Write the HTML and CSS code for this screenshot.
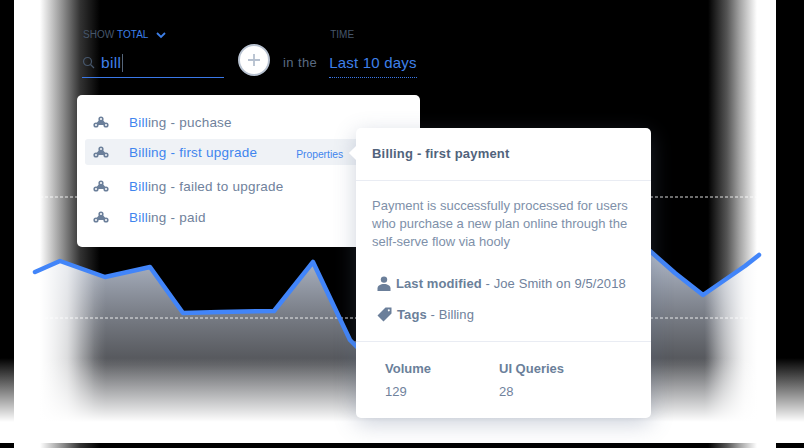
FILE: index.html
```html
<!DOCTYPE html>
<html lang="en">
<head>
  <meta charset="UTF-8">
  <meta name="viewport" content="width=device-width, initial-scale=1.0">
  <title>Billing events</title>
  <link rel="stylesheet" href="styles.css">
</head>
<body>
  <div class="stage">
    <div class="bands"></div>

    <svg class="chart" width="804" height="448" viewBox="0 0 804 448">
      <defs>
        <linearGradient id="areaFill" x1="0" y1="255" x2="0" y2="365" gradientUnits="userSpaceOnUse">
          <stop offset="0" stop-color="#b9c2d3" stop-opacity="0.95"/>
          <stop offset="1" stop-color="#85888f" stop-opacity="0.62"/>
        </linearGradient>
        <linearGradient id="sideGlow" x1="40" y1="0" x2="757" y2="0" gradientUnits="userSpaceOnUse">
          <stop offset="0" stop-color="#fff" stop-opacity="1"/>
          <stop offset="0.038" stop-color="#fff" stop-opacity="0.72"/>
          <stop offset="0.06" stop-color="#fff" stop-opacity="0.36"/>
          <stop offset="0.076" stop-color="#fff" stop-opacity="0.12"/>
          <stop offset="0.092" stop-color="#fff" stop-opacity="0"/>
          <stop offset="0.927" stop-color="#fff" stop-opacity="0"/>
          <stop offset="0.955" stop-color="#fff" stop-opacity="0.5"/>
          <stop offset="0.983" stop-color="#fff" stop-opacity="0.9"/>
          <stop offset="1" stop-color="#fff" stop-opacity="1"/>
        </linearGradient>
      </defs>
      <path class="area" d="M35 272L60 261L105 277L150 267L183 313L274 311L313 262L352 342L651 252L675 273L703 295L745 266L759 255V443H35Z"/>
      <path class="area-glow" d="M35 272L60 261L105 277L150 267L183 313L274 311L313 262L352 342L651 252L675 273L703 295L745 266L759 255V443H35Z"/>
    </svg>

    <div class="fade"></div>

    <svg class="chart" width="804" height="448" viewBox="0 0 804 448">
      <line class="guide" x1="40" y1="197" x2="757" y2="197"/>
      <line class="guide" x1="40" y1="318" x2="757" y2="318"/>
      <polyline class="trend" points="35,272 60,261 105,277 150,267 183,313 220,312 274,311 313,262 350,340 358,348"/>
      <polyline class="trend" points="650,251 675,273 703,295 745,266 759,255"/>
    </svg>

    <div class="controls">
      <div class="field search">
        <div class="label">SHOW <span class="blue">TOTAL</span>
          <svg class="chev" width="10" height="7" viewBox="0 0 10 7"><path d="M1 1l4 4 4-4"/></svg>
        </div>
        <div class="input">
          <svg class="glass" width="13" height="13" viewBox="0 0 13 13"><circle cx="5.500" cy="5.500" r="4"/><path d="M8.500 8.500l3.500 3.500"/></svg>
          <span class="typed">bill</span><span class="caret"></span>
        </div>
      </div>
      <div class="add">
        <svg width="14" height="14" viewBox="0 0 14 14"><path d="M7 1v12M1 7h12"/></svg>
      </div>
      <div class="in-the">in the</div>
      <div class="field time">
        <div class="label">TIME</div>
        <div class="input range">Last 10 days</div>
      </div>
    </div>

    <div class="menu">
      <div class="row"><svg class="node" width="16" height="14" viewBox="0 0 16 14"><path d="M3 10l5-6 5 6"/><circle cx="3" cy="10" r="1.800"/><circle cx="8" cy="4" r="1.800"/><circle cx="13" cy="10" r="1.800"/></svg><span><b>Bill</b>ing - puchase</span></div>
      <div class="row active"><svg class="node" width="16" height="14" viewBox="0 0 16 14"><path d="M3 10l5-6 5 6"/><circle cx="3" cy="10" r="1.800"/><circle cx="8" cy="4" r="1.800"/><circle cx="13" cy="10" r="1.800"/></svg><span>Billing - first upgrade</span><em>Properties</em></div>
      <div class="row"><svg class="node" width="16" height="14" viewBox="0 0 16 14"><path d="M3 10l5-6 5 6"/><circle cx="3" cy="10" r="1.800"/><circle cx="8" cy="4" r="1.800"/><circle cx="13" cy="10" r="1.800"/></svg><span><b>Bill</b>ing - failed to upgrade</span></div>
      <div class="row"><svg class="node" width="16" height="14" viewBox="0 0 16 14"><path d="M3 10l5-6 5 6"/><circle cx="3" cy="10" r="1.800"/><circle cx="8" cy="4" r="1.800"/><circle cx="13" cy="10" r="1.800"/></svg><span><b>Bill</b>ing - paid</span></div>
    </div>

    <div class="card">
      <div class="card-head">Billing - first payment</div>
      <div class="card-body">
        <p>Payment is successfully processed for users who purchase a new plan online through the self-serve flow via hooly</p>
        <div class="meta"><svg width="14" height="15" viewBox="0 0 14 15"><circle cx="7" cy="3.600" r="3.200"/><path d="M0.500 15v-2.600C0.500 9.800 3.500 8 7 8s6.500 1.800 6.500 4.400V15z"/></svg><span><strong>Last modified</strong> - Joe Smith on 9/5/2018</span></div>
        <div class="meta"><svg width="15" height="15" viewBox="0 0 15 15"><path d="M8.500 0.500H14.500V6.500L6.500 14.500L0.500 8.500zM11.800 2.200a1 1 0 1 0 .01 0z" fill-rule="evenodd"/></svg><span><strong>Tags</strong> - Billing</span></div>
      </div>
      <div class="card-foot">
        <div class="stat"><strong>Volume</strong><span>129</span></div>
        <div class="stat"><strong>UI Queries</strong><span>28</span></div>
      </div>
    </div>
  </div>
</body>
</html>
```
FILE: styles.css
```css
* { box-sizing: border-box; }
html, body { margin: 0; height: 100%; }
body { font-family: "Liberation Sans", Arial, sans-serif; background: #000; color: #70829c; overflow: hidden; }

.stage { position: relative; width: 804px; height: 448px; background: #000; overflow: hidden; }
.bands { position: absolute; left: 14px; top: 0; width: 762px; height: 448px; background: linear-gradient(90deg, #fff 0, #fff 26px, #c4c4c4 38px, #888 50px, #333 66px, #000 86px, #000 694px, #555 713px, #a5a5a5 726px, #fff 743px, #fff 762px); }
.chart { position: absolute; left: 0; top: 0; }
.area { fill: url(#areaFill); }
.area-glow { fill: url(#sideGlow); }
.fade { position: absolute; left: 0; top: 358px; width: 804px; height: 85px; background: linear-gradient(180deg, rgba(255,255,255,0) 0, #fff 64px, #fff 85px); }
.guide { stroke: #fff; stroke-width: 1; stroke-dasharray: 3 2; opacity: 0.85; }
.trend { fill: none; stroke: #4285f9; stroke-width: 4.500; stroke-linecap: round; stroke-linejoin: round; }

.controls { position: relative; display: flex; align-items: flex-end; padding: 28px 0 0 82px; }
.field { display: flex; flex-direction: column; }
.label { font-size: 10px; color: #46566b; height: 14px; line-height: 14px; display: flex; align-items: center; gap: 3px; padding-left: 1px; }
.blue { color: #3d7fe8; }
.chev { margin-left: 5px; fill: none; stroke: #3d7fe8; stroke-width: 1.800; }
.input { display: flex; align-items: center; height: 29px; margin-top: 7px; border-bottom: 1px solid #3a78e8; font-size: 15.500px; padding-bottom: 1px; color: #3f80ea; }
.search .input { width: 142px; }
.glass { fill: none; stroke: #46566b; stroke-width: 1.200; margin: 0 6px 0 0; }
.typed { letter-spacing: 0.3px; }
.caret { width: 1px; height: 18px; background: #55657a; margin-left: 1px; }
.add { display: flex; align-items: center; justify-content: center; width: 32px; height: 32px; margin: 0 13px 2px 14px; border-radius: 50%; background: #fff; border: 2px solid #b8c2d0; }
.add svg { fill: none; stroke: #b5c0cf; stroke-width: 1.800; }
.in-the { font-size: 13px; color: #5a6b82; margin: 0 12px 8px 0; letter-spacing: 0.4px; }
.range { border-bottom: 1px dotted #3a78e8; font-size: 15px; letter-spacing: 0.2px; padding-bottom: 2px; }

.menu { position: absolute; left: 77px; top: 95px; width: 343px; height: 152px; padding: 14px 8px; background: #fff; border-radius: 5px; }
.row { display: flex; align-items: center; height: 26px; margin-bottom: 5px; padding-left: 8px; font-size: 13.500px; letter-spacing: 0.22px; color: #70829c; border-radius: 3px; }
.row:first-child { margin-bottom: 4px; }
.row.active { margin-bottom: 8px; background: #eff2f6; color: #3f85ee; }
.row span { margin-left: 20px; }
.row b { font-weight: normal; color: #3f85ee; }
.row em { font-style: normal; font-size: 10.300px; letter-spacing: 0; color: #3f85ee; margin: 4px 0 0 39px; }
.node { fill: #6b7f9a; stroke: #6b7f9a; stroke-width: 1.600; flex: none; }
.node circle { fill: #fff; }
.row.active .node circle { fill: #eff2f6; }

.card { position: absolute; left: 356px; top: 128px; width: 295px; height: 290px; background: #fff; border-radius: 5px; box-shadow: 0 6px 22px rgba(90,105,140,0.3); }
.card::before { content: ""; position: absolute; left: -5px; top: 20px; width: 10px; height: 10px; background: #fff; transform: rotate(45deg); }
.card-head { height: 53px; padding: 18px 16px 0; font-size: 13px; font-weight: bold; color: #51637c; letter-spacing: 0.2px; border-bottom: 1px solid #e9ecf3; }
.card-body { height: 161px; padding: 16px 12px 0 16px; border-bottom: 1px solid #e9ecf3; }
.card-body p { margin: 0 0 17px; font-size: 13px; line-height: 18px; color: #7e90a9; }
.meta { display: flex; align-items: center; height: 31px; padding-left: 5px; font-size: 13px; letter-spacing: 0.1px; color: #70829c; }
.meta svg { fill: #6b7f9a; flex: none; margin-right: 5px; }
.meta strong { color: #6b7f9a; }
.card-foot { display: flex; padding: 19px 29px 0; }
.stat { display: flex; flex-direction: column; width: 114px; font-size: 13px; gap: 8px; }
.stat strong { color: #6b7f9a; }
```
